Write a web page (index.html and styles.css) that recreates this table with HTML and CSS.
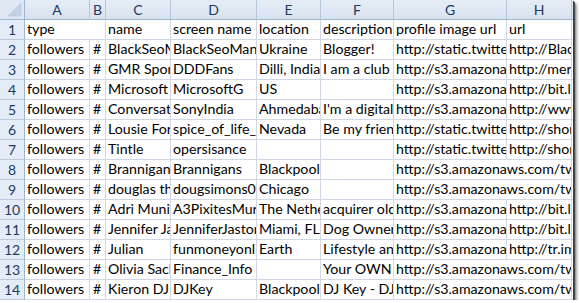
FILE: index.html
```html
<!DOCTYPE html>
<html>
<head>
<meta charset="utf-8">
<link rel="stylesheet" href="styles.css">
</head>
<body>
<div class="wrap">
  <div class="sheet">
    <div class="hd corner"><svg width="24" height="19" viewBox="0 0 24 19"><polygon points="8,16 21,16 21,3" fill="#c3d2e6" stroke="#b3c5dc" stroke-width="0.6"/></svg></div>
    <div class="hd col">A</div><div class="hd col">B</div><div class="hd col">C</div><div class="hd col">D</div><div class="hd col">E</div><div class="hd col">F</div><div class="hd col">G</div><div class="hd col">H</div><div class="hd col">I</div>

    <div class="hd rh">1</div>
    <div class="c s2">type</div><div class="c">name</div><div class="c">screen name</div><div class="c">location</div><div class="c">description</div><div class="c">profile image url</div><div class="c">url</div><div class="c">pr</div>

    <div class="hd rh">2</div>
    <div class="c">followers</div><div class="c h">#</div><div class="c">BlackSeoMa</div><div class="c">BlackSeoMan</div><div class="c">Ukraine</div><div class="c">Blogger!</div><div class="c">http://static.twitte</div><div class="c">http://Blac</div><div class="c"></div>

    <div class="hd rh">3</div>
    <div class="c">followers</div><div class="c h">#</div><div class="c">GMR Sport</div><div class="c">DDDFans</div><div class="c">Dilli, India</div><div class="c">I am a club w</div><div class="c">http://s3.amazonaw</div><div class="c">http://mer</div><div class="c"></div>

    <div class="hd rh">4</div>
    <div class="c">followers</div><div class="c h">#</div><div class="c">Microsoft G</div><div class="c">MicrosoftG</div><div class="c">US</div><div class="c"></div><div class="c">http://s3.amazonaw</div><div class="c">http://bit.l</div><div class="c"></div>

    <div class="hd rh">5</div>
    <div class="c">followers</div><div class="c h">#</div><div class="c">Conversati</div><div class="c">SonyIndia</div><div class="c">Ahmedaba</div><div class="c">I'm a digital c</div><div class="c">http://s3.amazonaw</div><div class="c">http://www</div><div class="c"></div>

    <div class="hd rh">6</div>
    <div class="c">followers</div><div class="c h">#</div><div class="c">Lousie Fors</div><div class="c">spice_of_life_</div><div class="c">Nevada</div><div class="c">Be my friend</div><div class="c">http://static.twitte</div><div class="c">http://shor</div><div class="c"></div>

    <div class="hd rh">7</div>
    <div class="c">followers</div><div class="c h">#</div><div class="c">Tintle</div><div class="c">opersisance</div><div class="c"></div><div class="c"></div><div class="c">http://static.twitte</div><div class="c">http://shor</div><div class="c"></div>

    <div class="hd rh">8</div>
    <div class="c">followers</div><div class="c h">#</div><div class="c">Brannigans</div><div class="c">Brannigans</div><div class="c">Blackpool</div><div class="c"></div><div class="c s2">http://s3.amazonaws.com/twi</div><div class="c"></div>

    <div class="hd rh">9</div>
    <div class="c">followers</div><div class="c h">#</div><div class="c">douglas tho</div><div class="c">dougsimons01</div><div class="c">Chicago</div><div class="c"></div><div class="c s2">http://s3.amazonaws.com/twi</div><div class="c"></div>

    <div class="hd rh">10</div>
    <div class="c">followers</div><div class="c h">#</div><div class="c">Adri Munir</div><div class="c">A3PixitesMurr</div><div class="c">The Nether</div><div class="c">acquirer old</div><div class="c">http://s3.amazonaw</div><div class="c">http://bit.l</div><div class="c"></div>

    <div class="hd rh">11</div>
    <div class="c">followers</div><div class="c h">#</div><div class="c">Jennifer Jas</div><div class="c">JenniferJaston</div><div class="c">Miami, FL</div><div class="c">Dog Owner,</div><div class="c">http://s3.amazonaw</div><div class="c">http://bit.l</div><div class="c"></div>

    <div class="hd rh">12</div>
    <div class="c">followers</div><div class="c h">#</div><div class="c">Julian</div><div class="c">funmoneyonlin</div><div class="c">Earth</div><div class="c">Lifestyle and</div><div class="c">http://s3.amazonaw</div><div class="c">http://tr.im</div><div class="c"></div>

    <div class="hd rh">13</div>
    <div class="c">followers</div><div class="c h">#</div><div class="c">Olivia Sack</div><div class="c">Finance_Info</div><div class="c"></div><div class="c">Your OWN g</div><div class="c s2">http://s3.amazonaws.com/twi</div><div class="c"></div>

    <div class="hd rh">14</div>
    <div class="c">followers</div><div class="c h">#</div><div class="c">Kieron DJ</div><div class="c">DJKey</div><div class="c">Blackpool,</div><div class="c">DJ Key - DJ a</div><div class="c s2">http://s3.amazonaws.com/twi</div><div class="c"></div>
  </div>
</div>
</body>
</html>
```

FILE: styles.css
```css
html, body {
  margin: 0;
  padding: 0;
  background: #ffffff;
}

.wrap {
  width: 573px;
  height: 300px;
  overflow: hidden;
  background: #ffffff;
  box-shadow: 1px 1px 0 #3c3c3c, 2px 2px 0 #4a4a4a, 3px 3px 2px rgba(0, 0, 0, 0.45), 5px 5px 3px rgba(0, 0, 0, 0.15);
}

.sheet {
  display: grid;
  grid-template-columns: 25px 65px 16px 65px 86px 64px 73px 113px 65px 60px;
  grid-auto-rows: 20px;
  width: max-content;
  font-family: Lato, "Liberation Sans", sans-serif;
  font-size: 14.2px;
  color: #000000;
}

.c {
  box-sizing: border-box;
  border-right: 1px solid #d0d7e5;
  border-bottom: 1px solid #d0d7e5;
  padding: 0 2px;
  line-height: 18px;
  white-space: nowrap;
  overflow: hidden;
}

.c.h {
  padding-left: 3px;
}

.s2 {
  grid-column: span 2;
}

.hd {
  box-sizing: border-box;
  border-right: 1px solid #9eb6ce;
  border-bottom: 1px solid #9eb6ce;
  color: #1f3a5f;
  text-align: center;
  line-height: 19px;
  font-size: 14px;
}

.col {
  background: linear-gradient(#e6edf6, #d8e2ef);
  border-right-color: #b7c7da;
}

.corner {
  background: #dfe7f2;
  display: flex;
  align-items: flex-start;
}

.corner svg {
  display: block;
}

.rh {
  background: #e4ecf7;
  border-bottom-color: #b9c9dc;
  line-height: 19px;
}
```
